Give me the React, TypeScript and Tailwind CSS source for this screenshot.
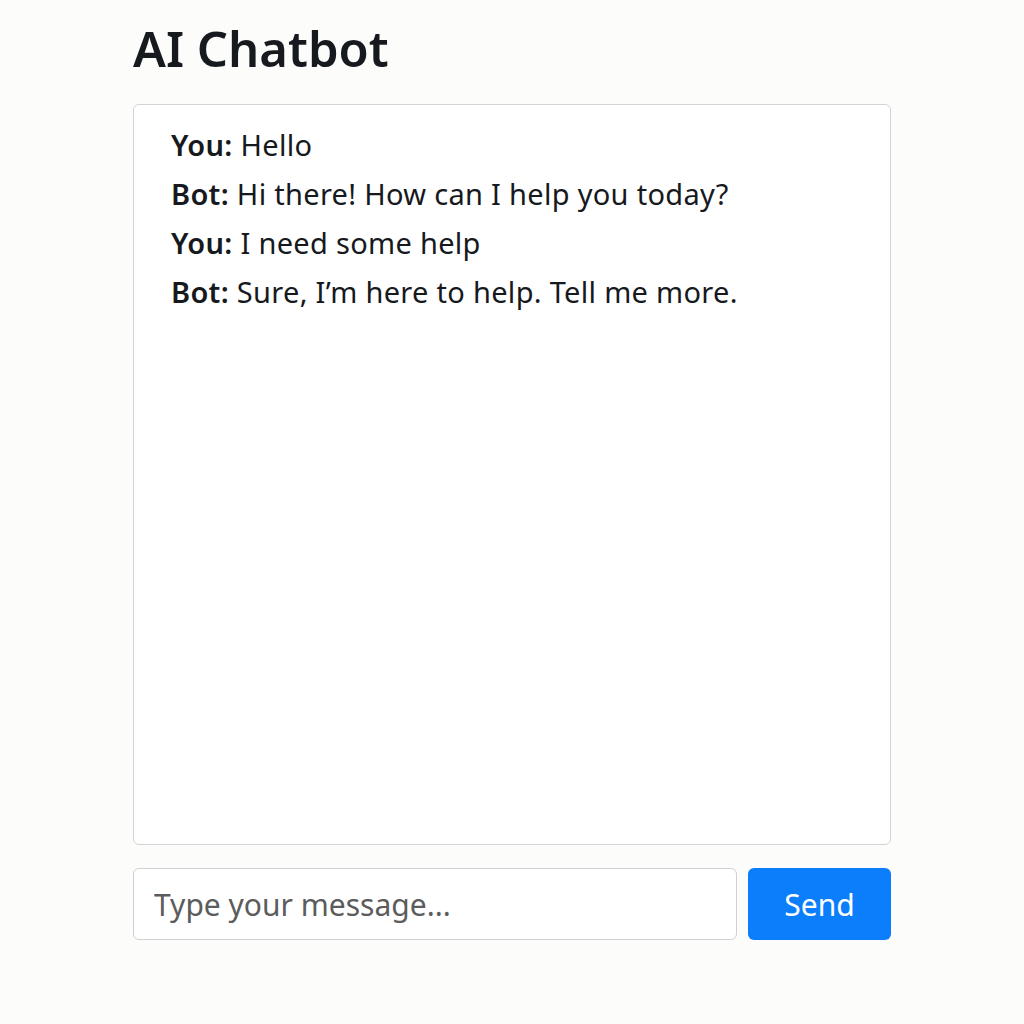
import React from "react";

export default function App() {
  const messages = [
    { who: "You", text: "Hello" },
    { who: "Bot", text: "Hi there! How can I help you today?" },
    { who: "You", text: "I need some help" },
    { who: "Bot", text: "Sure, I\u2019m here to help. Tell me more." },
  ];

  return (
    <div
      className="min-h-[1024px] bg-[#fcfcfb] text-[#16191d]"
      style={{ fontFamily: '"Noto Sans", "Open Sans", sans-serif' }}
    >
      <div className="mx-auto w-[758px] pt-[18px]">
        <h1 className="text-[49px] font-semibold leading-[60px]">AI Chatbot</h1>

        <div className="mt-[26px] h-[741px] rounded-[6px] border border-[#d4d4d4] bg-white px-[37px] pt-[15px]">
          {messages.map((m, i) => (
            <p key={i} className="text-[29px] leading-[49px] tracking-[0.3px]">
              <span className="font-semibold">{m.who}:</span> {m.text}
            </p>
          ))}
        </div>

        <div className="mt-[23px] flex justify-between">
          <input
            className="h-[72px] w-[604px] rounded-[6px] border border-[#d0d0d0] bg-white px-[20px] text-[30px] placeholder:text-[#5c5c5c] outline-none"
            placeholder="Type your message..."
          />
          <button className="h-[72px] w-[143px] rounded-[6px] bg-[#0b7ffb] text-[30px] text-white">
            Send
          </button>
        </div>
      </div>
    </div>
  );
}
